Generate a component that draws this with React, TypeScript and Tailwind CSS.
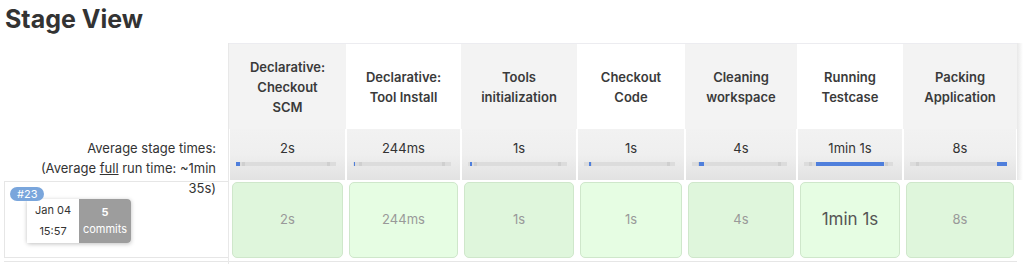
import React from "react";

type Col = {
  name: string[];
  w: number;
  avg: string;
  bl: number;
  bw: number;
  white: boolean;
  big?: boolean;
};

const cols: Col[] = [
  { name: ["Declarative:", "Checkout", "SCM"], w: 117, avg: "2s", bl: 0, bw: 4, white: false },
  { name: ["Declarative:", "Tool Install"], w: 115, avg: "244ms", bl: 1, bw: 1.5, white: true },
  { name: ["Tools", "initialization"], w: 116, avg: "1s", bl: 2, bw: 2, white: false },
  { name: ["Checkout", "Code"], w: 108, avg: "1s", bl: 6, bw: 1.5, white: true },
  { name: ["Cleaning", "workspace"], w: 112, avg: "4s", bl: 7, bw: 6, white: false },
  { name: ["Running", "Testcase"], w: 106, avg: "1min 1s", bl: 14, bw: 76, white: true, big: true },
  { name: ["Packing", "Application"], w: 114, avg: "8s", bl: 90, bw: 10, white: false },
];

const font = { fontFamily: "Inter, 'Liberation Sans', Arial, sans-serif" };

function Column({ c }: { c: Col }) {
  return (
    <div className="flex flex-col shrink-0" style={{ width: c.w }}>
      <div
        className={`h-[86px] flex flex-col items-center justify-center text-[13px] font-semibold leading-[20px] text-[#3a3a3a] border-t border-[#ececf0] ${
          c.white ? "bg-white" : "bg-[#f3f3f3]"
        }`}
      >
        {c.name.map((n) => (
          <div key={n}>{n}</div>
        ))}
      </div>
      <div className="h-[51px] mx-[1px] bg-gradient-to-b from-[#f2f2f2] via-[#efefef] to-[#e2e2e2] flex flex-col items-center pt-[10px]">
        <div className="text-[13px] leading-[18px] text-[#333]">{c.avg}</div>
        <div className="relative mt-[5px] h-[4px] self-stretch ml-[6px] mr-[9px] bg-[#dcdcdc]">
          <div className="absolute left-[6%] top-0 h-[4px] w-[3px] bg-[#cfcfcf]" />
          <div className="absolute right-[6%] top-0 h-[4px] w-[3px] bg-[#cfcfcf]" />
          <div
            className="absolute top-0 h-[4px] bg-[#4f7fdc]"
            style={{ left: `${c.bl}%`, width: `max(1px, ${c.bw}%)` }}
          />
        </div>
      </div>
      <div className="h-[81px] px-[3px] pt-[2px] pb-[3px] bg-white">
        <div
          className={`h-full rounded-[5px] border border-[#cfe7cb] flex items-center justify-center ${
            c.white ? "bg-[#e6fde3]" : "bg-[#dff6dc]"
          } ${c.big ? "text-[17px] text-[#555]" : "text-[13px] text-[#999]"}`}
        >
          {c.avg}
        </div>
      </div>
      <div className="h-[20px] border-t border-[#e6e6e6] bg-white" />
    </div>
  );
}

export default function App() {
  return (
    <div className="w-[1024px] h-[264px] overflow-hidden bg-white" style={font}>
      <div className="h-[43px] pl-[5px] pt-[3px] text-[25px] leading-[32px] font-bold text-[#333]">
        Stage View
      </div>
      <div className="flex">
        <div className="w-[229px] shrink-0 flex flex-col border-r border-[#e8e8e8]">
          <div className="h-[86px]" />
          <div className="h-[51px] pr-[12px] pt-[9px] text-right text-[13px] leading-[20px] text-[#333] relative z-10">
            <div>Average stage times:</div>
            <div>
              (Average <span className="underline">full</span> run time: ~1min
            </div>
            <div>35s)</div>
          </div>
          <div className="h-[81px] pt-[1px] pb-[3px] pl-[4px]">
            <div className="relative h-full border border-r-0 border-[#e6e6e6]">
              <div className="absolute left-[5px] top-[5px] h-[14px] px-[7px] rounded-full bg-[#7aa6dc] text-white text-[11px] leading-[14px] z-10">
                #23
              </div>
              <div className="absolute left-[22px] top-[17px] flex h-[44px] shadow-[0_1px_4px_rgba(0,0,0,0.25)] rounded-[3px]">
                <div className="w-[52px] bg-white flex flex-col items-center justify-center text-[11px] leading-[21px] text-[#333]">
                  <div>Jan 04</div>
                  <div>15:57</div>
                </div>
                <div className="w-[52px] bg-[#9d9d9d] rounded-r-[4px] flex flex-col items-center justify-center text-[11px] leading-[17px] text-white">
                  <div className="font-bold">5</div>
                  <div>commits</div>
                </div>
              </div>
            </div>
          </div>
          <div className="h-[20px] border-t border-[#e6e6e6] ml-[4px]" />
        </div>
        {cols.map((c) => (
          <Column key={c.name.join(" ")} c={c} />
        ))}
        <div className="w-[6px] shrink-0 bg-gradient-to-r from-[#e8e8e8] to-white h-[137px]" />
      </div>
    </div>
  );
}
